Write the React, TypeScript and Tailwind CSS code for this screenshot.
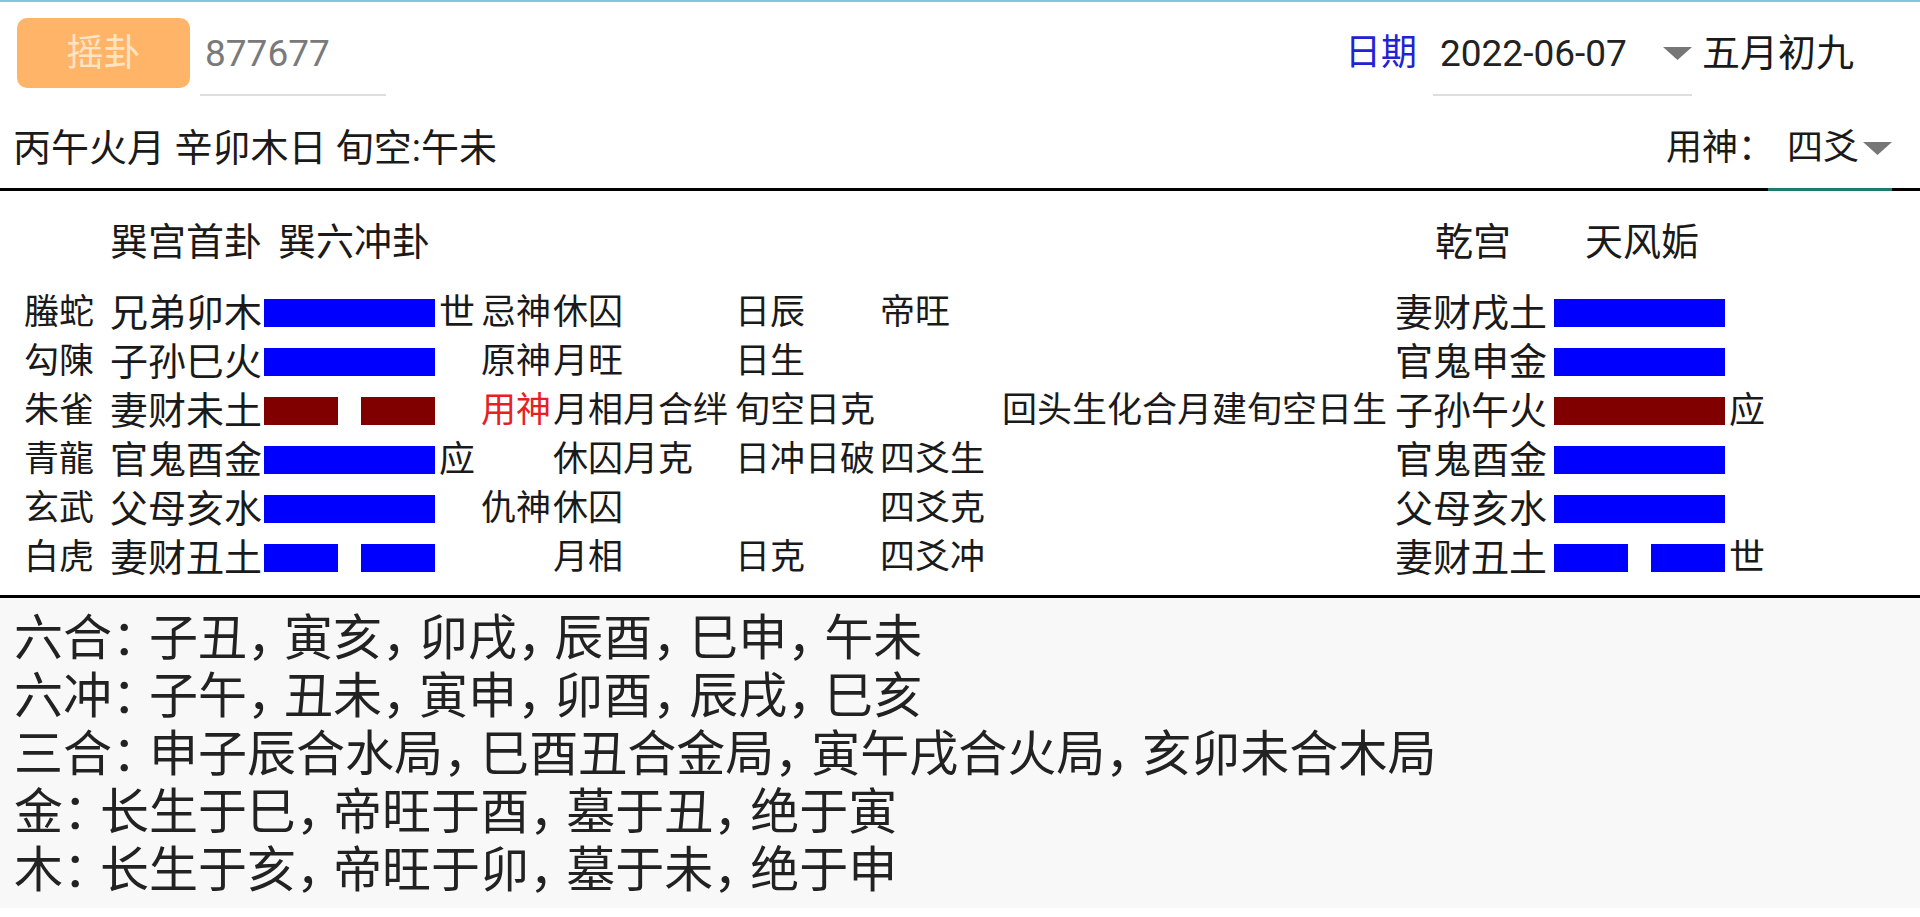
import React from "react";

type Line = {
    god: string;
    name: string;
    yang: boolean;
    color: string;
    mark: string;
    a: string;
    b: string;
    c: string;
    d: string;
    e: string;
    rname: string;
    ryang: boolean;
    rcolor: string;
    rmark: string;
};

const BLUE = "bg-[#0000ff]";
const RED = "bg-[#800000]";

const lines: Line[] = [
    { god: "螣蛇", name: "兄弟卯木", yang: true, color: BLUE, mark: "世", a: "忌神", b: "休囚", c: "日辰", d: "帝旺", e: "", rname: "妻财戌土", ryang: true, rcolor: BLUE, rmark: "" },
    { god: "勾陳", name: "子孙巳火", yang: true, color: BLUE, mark: "", a: "原神", b: "月旺", c: "日生", d: "", e: "", rname: "官鬼申金", ryang: true, rcolor: BLUE, rmark: "" },
    { god: "朱雀", name: "妻财未土", yang: false, color: RED, mark: "", a: "用神", b: "月相月合绊", c: "旬空日克", d: "", e: "回头生化合月建旬空日生", rname: "子孙午火", ryang: true, rcolor: RED, rmark: "应" },
    { god: "青龍", name: "官鬼酉金", yang: true, color: BLUE, mark: "应", a: "", b: "休囚月克", c: "日冲日破", d: "四爻生", e: "", rname: "官鬼酉金", ryang: true, rcolor: BLUE, rmark: "" },
    { god: "玄武", name: "父母亥水", yang: true, color: BLUE, mark: "", a: "仇神", b: "休囚", c: "", d: "四爻克", e: "", rname: "父母亥水", ryang: true, rcolor: BLUE, rmark: "" },
    { god: "白虎", name: "妻财丑土", yang: false, color: BLUE, mark: "", a: "", b: "月相", c: "日克", d: "四爻冲", e: "", rname: "妻财丑土", ryang: false, rcolor: BLUE, rmark: "世" },
];

const notes = [
    "六合：子丑，寅亥，卯戌，辰酉，巳申，午未",
    "六冲：子午，丑未，寅申，卯酉，辰戌，巳亥",
    "三合：申子辰合水局，巳酉丑合金局，寅午戌合火局，亥卯未合木局",
    "金：长生于巳，帝旺于酉，墓于丑，绝于寅",
    "木：长生于亥，帝旺于卯，墓于未，绝于申",
];

function Arrow() {
    return (
        <svg width="29" height="13" viewBox="0 0 29 13" className="shrink-0">
            <polygon points="0,0 29,0 14.5,13" fill="#777777" />
        </svg>
    );
}

function Bar({ yang, color }: { yang: boolean; color: string }) {
    if (yang) return <div className={`w-[171px] h-[28px] ${color}`} />;
    return (
        <div className="w-[171px] h-[28px] flex justify-between">
            <div className={`w-[74px] h-full ${color}`} />
            <div className={`w-[74px] h-full ${color}`} />
        </div>
    );
}

function Note({ text }: { text: string }) {
    return (
        <div className="h-[58px] flex items-center whitespace-nowrap">
            {text.split("").map((ch, i) =>
                ch === "，" || ch === "：" ? (
                    <span key={i} className="w-[37px] overflow-hidden">{ch}</span>
                ) : (
                    <span key={i}>{ch}</span>
                )
            )}
        </div>
    );
}

export default function App() {
    return (
        <main className="w-[1920px] h-[917px] overflow-hidden bg-white text-[#1a1a1a] font-[Roboto,'Noto_Sans_CJK_SC',sans-serif] leading-none">
            <div className="h-[2px] bg-[#7fc9da]" />

            {/* top bar */}
            <section className="h-[94px] pt-[16px] flex items-start">
                <button className="ml-[17px] w-[173px] h-[70px] rounded-[10px] bg-[#ffb467] text-[#ffe4c4] text-[37px] flex items-center justify-center">摇卦</button>
                <div className="ml-[10px] w-[186px] flex flex-col">
                    <div className="h-[70px] flex items-center pl-[5px] text-[37px] text-[#7a7a7a]">877677</div>
                    <div className="mt-[6px] h-[2px] bg-[#dedede]" />
                </div>
                <div className="flex-1" />
                <div className="h-[70px] flex items-center text-[36px] text-[#2222d4]">日期</div>
                <div className="ml-[16px] w-[259px] flex flex-col">
                    <div className="h-[70px] flex items-center pl-[7px] text-[37px] text-[#222]">
                        <span>2022-06-07</span>
                        <span className="flex-1" />
                        <Arrow />
                    </div>
                    <div className="mt-[6px] h-[2px] bg-[#dedede]" />
                </div>
                <div className="ml-[10px] mr-[66px] h-[70px] flex items-center text-[38px]">五月初九</div>
            </section>

            {/* day info */}
            <section className="h-[92px] pt-[12px] flex items-center">
                <div className="pl-[13px] text-[38px] whitespace-nowrap">丙午火月 辛卯木日 旬空:午未</div>
                <div className="flex-1" />
                <div className="text-[36px]">用神：</div>
                <div className="ml-[13px] text-[36px]">四爻</div>
                <div className="ml-[4px] mr-[28px]"><Arrow /></div>
            </section>

            <div className="h-[3px] flex">
                <div className="flex-1 bg-black" />
                <div className="w-[124px] bg-[#1d7a6d]" />
                <div className="w-[28px] bg-black" />
            </div>

            {/* hexagram titles */}
            <section className="h-[97px] pt-[4px] flex items-center text-[38px] whitespace-nowrap">
                <div className="w-[1435px] pl-[110px] flex">
                    <span>巽宫首卦</span>
                    <span className="ml-[16px]">巽六冲卦</span>
                </div>
                <div className="w-[150px]">乾宫</div>
                <div>天风姤</div>
            </section>

            {/* six lines */}
            <section className="flex flex-col">
                {lines.map((l, i) => (
                    <div key={i} className="h-[49px] flex items-center whitespace-nowrap">
                        <div className="w-[110px] pl-[24px] text-[35px]">{l.god}</div>
                        <div className="w-[154px] text-[38px]">{l.name}</div>
                        <Bar yang={l.yang} color={l.color} />
                        <div className="w-[46px] pl-[4px] text-[36px]">{l.mark}</div>
                        <div className={`w-[72px] text-[35px] ${l.a === "用神" ? "text-[#e8201f]" : ""}`}>{l.a}</div>
                        <div className="w-[182px] text-[35px]">{l.b}</div>
                        <div className="w-[145px] text-[35px]">{l.c}</div>
                        <div className="w-[122px] text-[35px]">{l.d}</div>
                        <div className="w-[393px] text-[35px]">{l.e}</div>
                        <div className="w-[159px] text-[38px]">{l.rname}</div>
                        <Bar yang={l.ryang} color={l.rcolor} />
                        <div className="pl-[4px] text-[36px]">{l.rmark}</div>
                    </div>
                ))}
            </section>

            <div className="mt-[13px] h-[3px] bg-black" />

            {/* reference notes */}
            <section className="h-[310px] bg-[#f8f8f8] pt-[11px] pl-[14px] text-[49px] text-[#222]">
                {notes.map((n, i) => (
                    <Note key={i} text={n} />
                ))}
            </section>
        </main>
    );
}
